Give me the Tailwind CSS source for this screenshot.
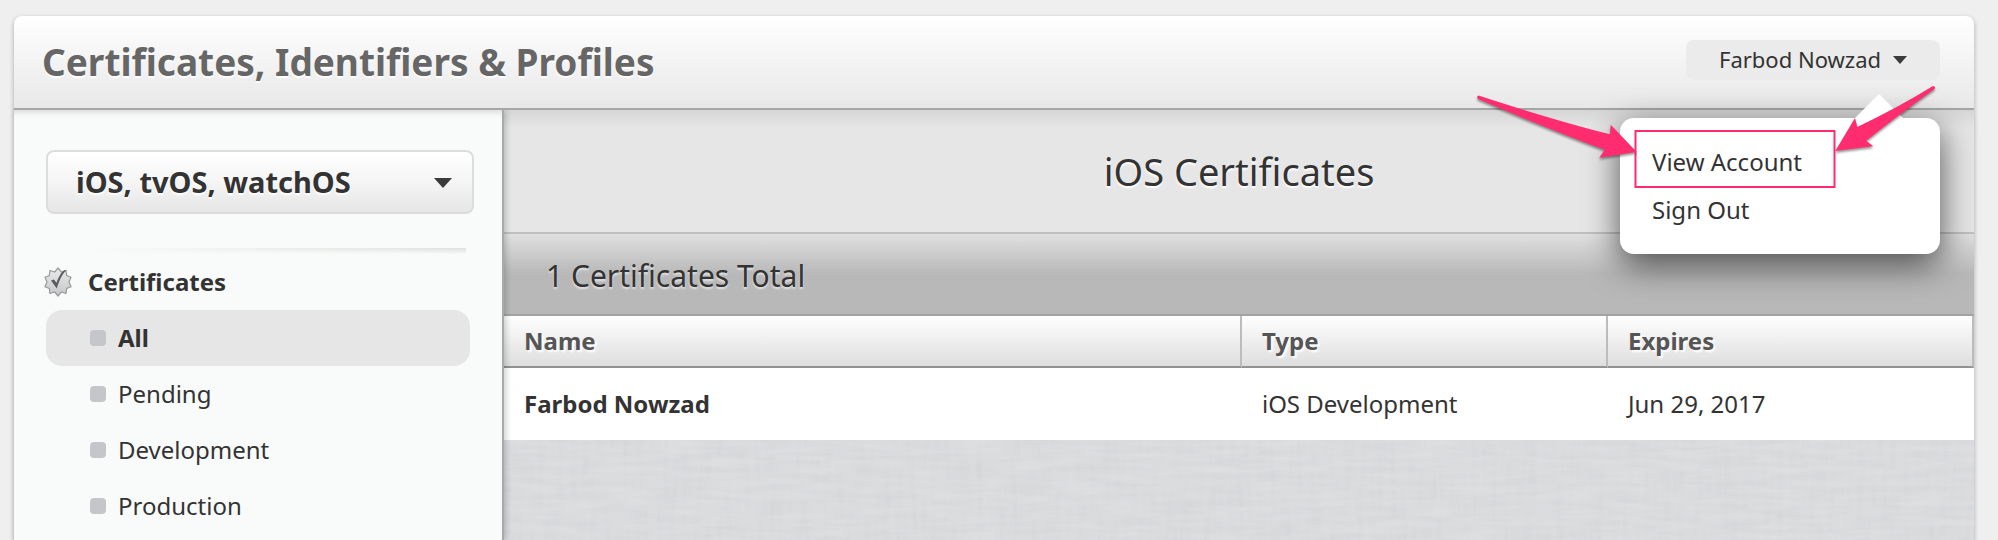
<!DOCTYPE html>
<html lang="en">
<head>
<meta charset="utf-8">
<meta name="viewport" content="width=device-width, initial-scale=1">
<title>Certificates, Identifiers &amp; Profiles</title>
<script src="https://cdn.jsdelivr.net/npm/@tailwindcss/browser@4"></script>
</head>
<body class="bg-[#efefef] font-['Noto_Sans','Open_Sans',sans-serif] text-2xl text-[#333]">
<div class="flex min-h-screen flex-col pt-4 pr-6 pl-3.5">
  <div class="flex flex-1 flex-col rounded-t-lg bg-[#d9dadc] shadow-[0_2px_5px_rgba(0,0,0,0.3)]">
    <header class="relative z-20 flex h-[94px] items-center justify-between rounded-t-lg border-b-2 border-[#a6a6a6] bg-linear-to-b from-white to-[#e8e8e8] pr-[34px] pl-7">
      <h1 class="text-[37px] font-bold text-[#666] [text-shadow:0_2px_1px_#fff]">Certificates, Identifiers &amp; Profiles</h1>
      <div class="relative mb-1">
        <button type="button" aria-haspopup="true" aria-expanded="true" class="flex h-10 w-[254px] items-center justify-center gap-3 rounded-lg bg-[#ebebeb] text-[22px]">
          Farbod Nowzad
          <svg class="h-2 w-3.5" viewBox="0 0 14 8" aria-hidden="true"><path d="M0 0H14L7 8Z" fill="#3a3a3a"/></svg>
        </button>
        <nav aria-label="Account" class="absolute top-[78px] right-0 w-80 rounded-[14px] bg-white px-8 pt-6 pb-6 shadow-[0_10px_34px_rgba(0,0,0,0.65)]">
          <a href="#account" class="block h-12 leading-10">View Account</a>
          <a href="#signout" class="block h-10 leading-10">Sign Out</a>
          <svg class="pointer-events-none absolute top-0 left-0 h-34 w-80 overflow-visible" viewBox="0 0 320 136" aria-hidden="true">
            <path d="M234 1 259 -24 284 1Z" fill="#fff"/>
            <rect x="15.500" y="13" width="199" height="56" fill="none" stroke="#ff2d6f" stroke-width="2"/>
            <g fill="#ff2d6f" class="drop-shadow-[0_2px_1px_rgba(0,0,0,0.4)]">
              <path d="M-141.500 -22.500Q-144 -21 -142 -19Q-67 13 -15.300 31.700L-20.700 39.700 16.700 34 -9.300 6.700 -10 16.300Q-62 3.500 -141.500 -22.500Z"/>
              <path d="M313 -32Q316 -31.500 314.500 -29Q281 -5 246.300 22.700L253.300 28.300 215.300 33 235 0 237.300 9Q279 -11 313 -32Z"/>
            </g>
          </svg>
        </nav>
      </div>
    </header>

    <div class="flex flex-1">
      <aside class="z-10 w-[490px] shrink-0 border-r-2 border-[#a9a9a9] bg-[#f9fbfa] pt-10 pr-7 pl-8 shadow-[2px_0_6px_rgba(0,0,0,0.2),inset_0_8px_6px_-6px_rgba(0,0,0,0.15)]">
        <div class="relative">
          <select aria-label="Platform" class="block h-16 w-full appearance-none rounded-lg border-2 border-[#dcdcdc] bg-linear-to-b from-white from-0% via-[#f5f5f5] via-50% to-[#e6e6e6] pl-7 text-[29px] font-bold [text-shadow:0_2px_2px_#fff]">
            <option>iOS, tvOS, watchOS</option>
          </select>
          <svg class="pointer-events-none absolute top-7 right-[22px] h-2.5 w-[18px]" viewBox="0 0 18 10" aria-hidden="true"><path d="M0 0H18L9 10Z" fill="#3a3a3a"/></svg>
        </div>
        <div class="mt-[34px] mr-2 ml-10 h-1.5 mask-l-from-0% bg-linear-to-b from-[#dddfde] to-[#f7f9f8]"></div>
        <h2 class="flex h-14 items-center gap-4 font-bold">
          <svg class="-ml-0.5 h-[30px] w-7" viewBox="0 0 28 30" aria-hidden="true">
            <defs><linearGradient id="seal" x1="0" y1="0" x2="0" y2="1"><stop offset="0" stop-color="#e9eaea"/><stop offset="1" stop-color="#c6c7c9"/></linearGradient></defs>
            <path d="M14 1 17.300 5 22 3.500 22.700 8.500 27 10.300 25 15 27 19.700 22.700 21.500 22 26.500 17.300 25 14 29 10.700 25 6 26.500 5.300 21.500 1 19.700 3 15 1 10.300 5.300 8.500 6 3.500 10.700 5Z" fill="url(#seal)" stroke="#9a9a9a" stroke-width="1.200"/>
            <path d="M7 13.500 10 12.500 12.500 16C14 11 17 5.500 20 3.500L22.500 3C18 7 15 14 12.800 21.500Z" fill="#5b5b5b"/>
          </svg>
          Certificates
        </h2>
        <ul class="mr-1">
          <li><a href="#all" aria-current="page" class="flex h-14 items-center gap-3 rounded-2xl bg-[#e6e6e6] pl-11 font-bold"><span class="size-4 rounded bg-[#c5c6ca]"></span>All</a></li>
          <li><a href="#pending" class="flex h-14 items-center gap-3 pl-11"><span class="size-4 rounded bg-[#c5c6ca]"></span>Pending</a></li>
          <li><a href="#development" class="flex h-14 items-center gap-3 pl-11"><span class="size-4 rounded bg-[#c5c6ca]"></span>Development</a></li>
          <li><a href="#production" class="flex h-14 items-center gap-3 pl-11"><span class="size-4 rounded bg-[#c5c6ca]"></span>Production</a></li>
        </ul>
      </aside>

      <main class="flex min-w-0 flex-1 flex-col">
        <div class="flex h-[124px] items-center justify-center border-b-2 border-[#c0c0c0] bg-[#e6e6e6] bg-linear-to-b from-[#d6d6d6] to-[#e6e6e6] to-[18px]">
          <h2 class="text-[38px] [text-shadow:0_2px_2px_#fff]">iOS Certificates</h2>
        </div>
        <p class="flex h-[82px] items-center border-b-2 border-[#a3a3a3] bg-linear-to-b from-[#e0e0e0] to-[#b8b8b8] to-50% pt-1 pl-[42px] text-[30px] [text-shadow:0_2px_2px_#e4e4e4]">1 Certificates Total</p>
        <table class="w-full table-fixed border-separate border-spacing-0 text-left">
          <thead>
            <tr class="h-13 text-[#555] [text-shadow:2px_2px_2px_#fff]">
              <th scope="col" class="w-[50.2%] border-r-2 border-b-2 border-r-[#bcbcbc] border-b-[#929292] bg-linear-to-b from-white to-[#dedede] pl-5 font-bold">Name</th>
              <th scope="col" class="border-r-2 border-b-2 border-r-[#bcbcbc] border-b-[#929292] bg-linear-to-b from-white to-[#dedede] pl-5 font-bold">Type</th>
              <th scope="col" class="border-r-2 border-b-2 border-r-[#bcbcbc] border-b-[#929292] bg-linear-to-b from-white to-[#dedede] pl-5 font-bold">Expires</th>
            </tr>
          </thead>
          <tbody>
            <tr class="h-18 bg-white">
              <td class="pl-5 font-bold">Farbod Nowzad</td>
              <td class="pl-5">iOS Development</td>
              <td class="pl-5">Jun 29, 2017</td>
            </tr>
          </tbody>
        </table>
        <div class="relative flex-1 bg-[#d9dadc]">
          <svg class="absolute inset-0 size-full opacity-50" aria-hidden="true">
            <defs>
              <filter id="weave-h" x="0" y="0" width="100%" height="100%" color-interpolation-filters="sRGB"><feTurbulence type="fractalNoise" baseFrequency="0.02 0.15" numOctaves="2" seed="4"/><feColorMatrix values="0 0 0 0 0.900  0 0 0 0 0.900  0 0 0 0 0.910  1.600 0 0 0 -0.500"/></filter>
              <filter id="weave-v" x="0" y="0" width="100%" height="100%" color-interpolation-filters="sRGB"><feTurbulence type="fractalNoise" baseFrequency="0.150 0.020" numOctaves="2" seed="9"/><feColorMatrix values="0 0 0 0 0.780  0 0 0 0 0.790  0 0 0 0 0.800  1.200 0 0 0 -0.500"/></filter>
            </defs>
            <rect width="100%" height="100%" filter="url(#weave-v)"/>
            <rect width="100%" height="100%" filter="url(#weave-h)"/>
          </svg>
        </div>
      </main>
    </div>
  </div>
</div>
</body>
</html>
